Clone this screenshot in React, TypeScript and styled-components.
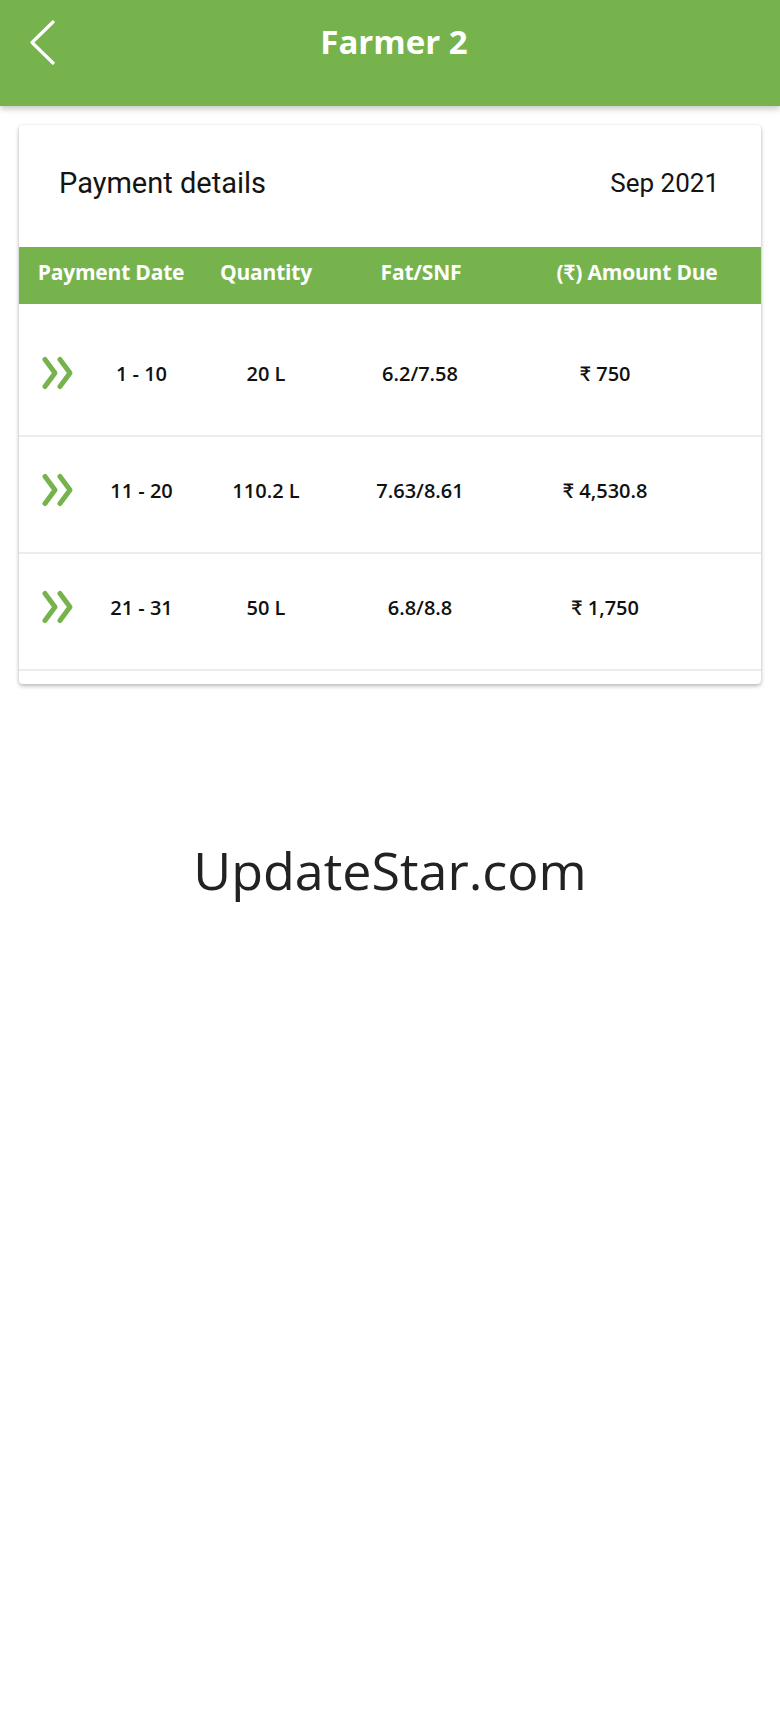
import React from 'react';
import styled, { createGlobalStyle } from 'styled-components';

const green = '#77b34d';

const GlobalStyle = createGlobalStyle`
  body {
    margin: 0;
    background: #ffffff;
  }
`;

const Page = styled.div`
  width: 780px;
  min-height: 1732px;
  background: #ffffff;
  font-family: "Open Sans", Lato, sans-serif;
`;

const TopBar = styled.header`
  height: 106px;
  box-sizing: border-box;
  padding-bottom: 24px;
  background: ${green};
  display: grid;
  grid-template-columns: 1fr auto 1fr;
  align-items: center;
  box-shadow: 0 3px 6px rgba(0, 0, 0, 0.22);
  position: relative;
  z-index: 1;
`;

const BackButton = styled.button`
  justify-self: start;
  margin-left: 26px;
  margin-top: 3px;
  padding: 0;
  border: 0;
  background: none;
  display: flex;
  cursor: pointer;
`;

const Title = styled.h1`
  margin: 0 0 0 8px;
  color: #ffffff;
  font-family: "Open Sans", sans-serif;
  font-weight: 700;
  font-size: 33px;
`;

const Card = styled.section`
  margin: 19px 19px 0;
  background: #ffffff;
  border-radius: 4px;
  box-shadow: 0 2px 4px rgba(0, 0, 0, 0.28), 0 0 2px rgba(0, 0, 0, 0.08);
  overflow: hidden;
`;

const CardHead = styled.div`
  height: 122px;
  box-sizing: border-box;
  padding: 0 42px 6px 40px;
  display: flex;
  align-items: center;
  justify-content: space-between;
  font-family: Roboto, "Liberation Sans", sans-serif;
  color: #141414;
`;

const CardTitle = styled.h2`
  margin: 0;
  font-weight: 400;
  font-size: 29px;
`;

const CardMonth = styled.span`
  font-size: 26px;
`;

const TableHead = styled.div`
  height: 57px;
  box-sizing: border-box;
  padding-bottom: 7px;
  background: ${green};
  display: grid;
  grid-template-columns: 184px 126px 184px 248px;
  align-items: center;
`;

const HeadCell = styled.span`
  text-align: center;
  color: #ffffff;
  font-weight: 700;
  font-size: 21px;
  letter-spacing: -0.2px;
`;

const RowList = styled.div`
  padding: 16px 0 13px;
`;

const Row = styled.div`
  height: 117px;
  box-sizing: border-box;
  padding: 0 0 9px 22px;
  display: grid;
  grid-template-columns: 34px 133px 116px 192px 178px;
  align-items: center;
  border-bottom: 2px solid #ececec;
`;

const Cell = styled.span`
  text-align: center;
  color: #111111;
  font-weight: 600;
  font-size: 20px;
`;

const Watermark = styled.div`
  margin-top: 155px;
  text-align: center;
  font-family: "Open Sans", sans-serif;
  font-size: 52px;
  line-height: 62px;
  color: #222222;
`;

const BackIcon = () => (
  <svg width="32" height="46" viewBox="0 0 32 46">
    <path d="M27 2 L6 22.5 L27 43" fill="none" stroke="#ffffff" strokeWidth="3.2" strokeLinecap="round" strokeLinejoin="round" />
  </svg>
);

const DoubleChevron = () => (
  <svg width="34" height="34" viewBox="0 0 34 34">
    <g fill="none" stroke={green} strokeWidth="5" strokeLinecap="round" strokeLinejoin="round">
      <path d="M4 3.5 L14 17 L4 30.5" />
      <path d="M19 3.5 L29 17 L19 30.5" />
    </g>
  </svg>
);

const payments = [
  { period: '1 - 10', qty: '20 L', fat: '6.2/7.58', amount: '₹ 750' },
  { period: '11 - 20', qty: '110.2 L', fat: '7.63/8.61', amount: '₹ 4,530.8' },
  { period: '21 - 31', qty: '50 L', fat: '6.8/8.8', amount: '₹ 1,750' },
];

const App: React.FunctionComponent = () => {
  return (
    <Page>
      <GlobalStyle />
      <TopBar>
        <BackButton aria-label="Back">
          <BackIcon />
        </BackButton>
        <Title>Farmer 2</Title>
        <span />
      </TopBar>
      <Card>
        <CardHead>
          <CardTitle>Payment details</CardTitle>
          <CardMonth>Sep 2021</CardMonth>
        </CardHead>
        <TableHead>
          <HeadCell>Payment Date</HeadCell>
          <HeadCell>Quantity</HeadCell>
          <HeadCell>Fat/SNF</HeadCell>
          <HeadCell>(₹) Amount Due</HeadCell>
        </TableHead>
        <RowList>
          {payments.map((p, key) => (
            <Row key={key}>
              <DoubleChevron />
              <Cell>{p.period}</Cell>
              <Cell>{p.qty}</Cell>
              <Cell>{p.fat}</Cell>
              <Cell>{p.amount}</Cell>
            </Row>
          ))}
        </RowList>
      </Card>
      <Watermark>UpdateStar.com</Watermark>
    </Page>
  );
};

export default App;
